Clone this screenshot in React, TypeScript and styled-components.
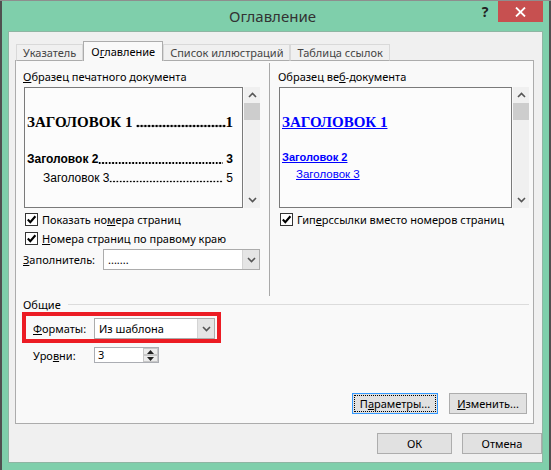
import React from "react";
import styled, { createGlobalStyle } from "styled-components";

const GlobalStyle = createGlobalStyle`
  * { box-sizing: border-box; }
  html, body { margin: 0; padding: 0; }
  body {
    width: 551px;
    height: 470px;
    overflow: hidden;
    background: #555;
    font-family: "Noto Sans", "Liberation Sans", sans-serif;
    font-size: 11px;
    color: #000;
  }
`;

const SERIF = `"Liberation Serif", "DejaVu Serif", serif`;
const SANS = `"Liberation Sans", Arial, sans-serif`;

const Page = styled.div`
  width: 551px;
  height: 470px;
  display: flex;
  flex-direction: column;
`;

const TopEdge = styled.div`
  height: 1px;
  flex: none;
  background: #8e8e8e;
`;

const Desk = styled.div`
  flex: 1;
  display: flex;
`;

const SideEdge = styled.div`
  width: 2px;
  flex: none;
  background: #505050;
`;

const Window = styled.div`
  width: 547px;
  flex: none;
  background: #7fcfab;
  display: flex;
  flex-direction: column;
  padding: 0 6px 7px;
`;

const TitleBar = styled.div`
  height: 30px;
  flex: none;
  margin: 0 -6px;
  padding-right: 6px;
  display: grid;
  grid-template-columns: 1fr auto 1fr;
`;

const Title = styled.div`
  grid-column: 2;
  align-self: center;
  font-size: 15px;
  color: #333;
  padding-bottom: 1px;
`;

const Controls = styled.div`
  grid-column: 3;
  justify-self: end;
  display: flex;
  align-items: flex-start;
`;

const HelpButton = styled.div`
  width: 26px;
  height: 21px;
  line-height: 22px;
  text-align: center;
  font-weight: bold;
  font-size: 14px;
  color: #222;
`;

const CloseButton = styled.div`
  width: 45px;
  height: 21px;
  background: #c75050;
  display: flex;
  align-items: center;
  justify-content: center;
`;

const Client = styled.div`
  flex: 1;
  background: #f0f0f0;
  border: 1px solid #8fb5a3;
  display: flex;
  flex-direction: column;
  padding: 9px 8px 8px 6px;
`;

const TabStrip = styled.div`
  height: 20px;
  flex: none;
  display: flex;
  align-items: flex-end;
  padding-left: 1px;
  margin-bottom: -1px;
  position: relative;
  z-index: 1;
`;

const Tab = styled.div<{ $active?: boolean }>`
  height: ${(p) => (p.$active ? 20 : 17)}px;
  padding: ${(p) => (p.$active ? "2px 7px 0" : "0 6px")};
  line-height: 16px;
  border: 1px solid ${(p) => (p.$active ? "#acacac" : "#d9d9d9")};
  border-bottom: ${(p) => (p.$active ? "none" : "1px solid #acacac")};
  background: ${(p) => (p.$active ? "#f9f9f9" : "#f0f0f0")};
  color: ${(p) => (p.$active ? "#000" : "#444")};
  white-space: nowrap;
`;

const Panel = styled.div`
  flex: 1;
  border: 1px solid #acacac;
  background: #f9f9f9;
  display: flex;
  flex-direction: column;
  padding: 0 4px 9px 0;
`;

const TopSection = styled.div`
  height: 235px;
  flex: none;
  display: flex;
  padding-left: 8px;
`;

const Column = styled.div<{ $w?: number }>`
  ${(p) => (p.$w ? `width: ${p.$w}px; flex: none;` : "flex: 1;")}
  padding-top: 8px;
  display: flex;
  flex-direction: column;
`;

const Divider = styled.div`
  width: 1px;
  flex: none;
  margin: 2px 9px 0;
  background: #a9a9a9;
`;

const GroupLabel = styled.div`
  line-height: 16px;
  margin: 0 0 2px -1px;
  white-space: nowrap;
`;

const Key = styled.span`
  text-decoration: underline;
`;

const PreviewFrame = styled.div`
  height: 121px;
  flex: none;
  display: flex;
`;

const PreviewBox = styled.div`
  flex: 1;
  min-width: 0;
  border: 1px solid #7a7a7a;
  background: #fcfcfc;
  padding: 25px 9px 0 2px;
  overflow: hidden;
`;

const ScrollBar = styled.div`
  width: 16px;
  flex: none;
  margin-left: 1px;
  background: #f0f0f0;
  display: flex;
  flex-direction: column;
`;

const ScrollArrow = styled.div`
  height: 16px;
  flex: none;
  display: flex;
  align-items: center;
  justify-content: center;
`;

const ScrollThumb = styled.div`
  height: 17px;
  flex: none;
  background: #cdcdcd;
`;

const ScrollTrack = styled.div`
  flex: 1;
`;

type LineProps = { $gap: number; $indent?: number; $serif?: boolean; $bold?: boolean; $size: number };

const TocLine = styled.div<LineProps>`
  display: flex;
  white-space: nowrap;
  margin-top: ${(p) => p.$gap}px;
  padding-left: ${(p) => p.$indent ?? 0}px;
  font-family: ${(p) => (p.$serif ? SERIF : SANS)};
  font-weight: ${(p) => (p.$bold ? "bold" : "normal")};
  font-size: ${(p) => p.$size}px;
  line-height: ${(p) => (p.$serif ? 18 : 16)}px;
`;

/* dot leader between a heading and its page number */
const Leader = styled.span<{ $step: number; $r: number; $y: number }>`
  flex: 1;
  min-width: 0;
  background-image: radial-gradient(circle, #000 ${(p) => p.$r}px, transparent ${(p) => p.$r + 0.6}px);
  background-size: ${(p) => p.$step}px ${(p) => p.$r * 2 + 2}px;
  background-repeat: repeat-x;
  background-position: 0 ${(p) => p.$y - p.$r - 1}px;
`;

const WebLink = styled.div<LineProps>`
  margin-top: ${(p) => p.$gap}px;
  padding-left: ${(p) => p.$indent ?? 0}px;
  font-family: ${(p) => (p.$serif ? SERIF : SANS)};
  font-weight: ${(p) => (p.$bold ? "bold" : "normal")};
  font-size: ${(p) => p.$size}px;
  line-height: ${(p) => (p.$serif ? 18 : 16)}px;
  color: #0000ff;
  text-decoration: underline;
  white-space: nowrap;
`;

const CheckRow = styled.div<{ $first?: boolean }>`
  height: 19px;
  flex: none;
  margin-top: ${(p) => (p.$first ? 2 : 0)}px;
  padding-left: 1px;
  display: flex;
  align-items: center;
  gap: 4px;
  white-space: nowrap;
`;

const CheckBox = styled.span`
  width: 13px;
  height: 13px;
  flex: none;
  border: 1px solid #333;
  background: #fff;
  display: inline-flex;
  align-items: center;
  justify-content: center;
`;

const FieldRow = styled.div<{ $gap: number; $indent: number }>`
  display: flex;
  align-items: center;
  margin-top: ${(p) => p.$gap}px;
  margin-left: ${(p) => p.$indent}px;
`;

const FieldLabel = styled.div<{ $w: number }>`
  width: ${(p) => p.$w}px;
  flex: none;
  white-space: nowrap;
`;

const Combo = styled.div<{ $w: number }>`
  width: ${(p) => p.$w}px;
  height: 21px;
  flex: none;
  border: 1px solid #acacac;
  background: #fff;
  display: flex;
`;

const ComboValue = styled.div`
  flex: 1;
  padding-left: 4px;
  line-height: 19px;
  white-space: nowrap;
`;

const ComboButton = styled.div`
  width: 17px;
  flex: none;
  background: #e5e5e5;
  border-left: 1px solid #d4d4d4;
  display: flex;
  align-items: center;
  justify-content: center;
`;

const GeneralHeader = styled.div`
  height: 15px;
  margin-top: 1px;
  padding-left: 7px;
  display: flex;
  align-items: center;
`;

const HeaderRule = styled.div`
  flex: 1;
  height: 1px;
  margin-left: 7px;
  background: #dcdcdc;
`;

const Highlight = styled.div`
  width: 199px;
  height: 31px;
  margin-left: 6px;
  border: 4px solid #ec1c24;
  padding: 2px 0 0 7px;
`;

const Spin = styled.div`
  width: 65px;
  height: 16px;
  border: 1px solid #abadb3;
  background: #fff;
  display: flex;
`;

const SpinValue = styled.div`
  flex: 1;
  padding-left: 3px;
  line-height: 14px;
`;

const SpinButtons = styled.div`
  width: 15px;
  flex: none;
  display: flex;
  flex-direction: column;
`;

const SpinHalf = styled.div`
  flex: 1;
  border: 1px solid #c8c8c8;
  background: #ececec;
  display: flex;
  align-items: center;
  justify-content: center;
`;

const Spacer = styled.div`
  flex: 1;
`;

const ButtonRow = styled.div`
  display: flex;
  justify-content: flex-end;
  gap: 11px;
  padding-right: 2px;
`;

const Button = styled.div<{ $w: number; $focused?: boolean }>`
  width: ${(p) => p.$w}px;
  height: 21px;
  border: 1px solid ${(p) => (p.$focused ? "#3399ff" : "#adadad")};
  background: #e1e1e1;
  padding: 1px;
  display: flex;
`;

const ButtonFace = styled.div<{ $focused?: boolean }>`
  flex: 1;
  border: 1px dotted ${(p) => (p.$focused ? "#000" : "transparent")};
  text-align: center;
  line-height: 15px;
  white-space: nowrap;
`;

const Footer = styled.div`
  height: 21px;
  flex: none;
  margin: 9px -8px 0 0;
  display: flex;
  justify-content: flex-end;
  gap: 10px;
`;

const Chevron = ({ up }: { up?: boolean }) => (
  <svg width="9" height="6" viewBox="0 0 9 6">
    <polyline
      points={up ? "1,5 4.5,1.5 8,5" : "1,1 4.5,4.5 8,1"}
      fill="none"
      stroke="#555"
      strokeWidth="1.6"
    />
  </svg>
);

const Triangle = ({ up }: { up?: boolean }) => (
  <svg width="7" height="4" viewBox="0 0 7 4">
    <polygon points={up ? "0,4 3.5,0 7,4" : "0,0 3.5,4 7,0"} fill="#222" />
  </svg>
);

const Check = () => (
  <svg width="11" height="11" viewBox="0 0 11 11">
    <polyline points="1.8,5.6 4.3,8.2 9.4,2.2" fill="none" stroke="#000" strokeWidth="2.1" />
  </svg>
);

const Scroll = () => (
  <ScrollBar>
    <ScrollArrow>
      <Chevron up />
    </ScrollArrow>
    <ScrollThumb />
    <ScrollTrack />
    <ScrollArrow>
      <Chevron />
    </ScrollArrow>
  </ScrollBar>
);

type BtnProps = { w: number; focused?: boolean; children: React.ReactNode };
const DialogButton = ({ w, focused, children }: BtnProps) => (
  <Button $w={w} $focused={focused}>
    <ButtonFace $focused={focused}>{children}</ButtonFace>
  </Button>
);

const CheckOption = ({ first, children }: { first?: boolean; children: React.ReactNode }) => (
  <CheckRow $first={first}>
    <CheckBox>
      <Check />
    </CheckBox>
    <span>{children}</span>
  </CheckRow>
);

export default function App() {
  return (
    <>
      <GlobalStyle />
      <Page>
        <TopEdge />
        <Desk>
          <SideEdge />
          <Window>
            <TitleBar>
              <Title>Оглавление</Title>
              <Controls>
                <HelpButton>?</HelpButton>
                <CloseButton>
                  <svg width="11" height="10" viewBox="0 0 11 10">
                    <path d="M1 0.5 L10 9.5 M10 0.5 L1 9.5" stroke="#fff" strokeWidth="1.8" />
                  </svg>
                </CloseButton>
              </Controls>
            </TitleBar>
            <Client>
              <TabStrip>
                <Tab>Указатель</Tab>
                <Tab $active>
                  О<Key>г</Key>лавление
                </Tab>
                <Tab>Список иллюстраций</Tab>
                <Tab>Таблица ссылок</Tab>
              </TabStrip>
              <Panel>
                <TopSection>
                  <Column $w={236}>
                    <GroupLabel>
                      <Key>О</Key>бразец печатного документа
                    </GroupLabel>
                    <PreviewFrame>
                      <PreviewBox>
                        <TocLine $gap={0} $serif $bold $size={15}>
                          <span>ЗАГОЛОВОК 1&nbsp;</span>
                          <Leader $step={3.75} $r={1.1} $y={13} />
                          <span>1</span>
                        </TocLine>
                        <TocLine $gap={20} $bold $size={12}>
                          <span>Заголовок 2</span>
                          <Leader $step={3.35} $r={0.8} $y={11.4} />
                          <span>&nbsp;3</span>
                        </TocLine>
                        <TocLine $gap={3} $indent={16} $size={12}>
                          <span>Заголовок 3</span>
                          <Leader $step={3.35} $r={0.7} $y={11.5} />
                          <span>&nbsp;5</span>
                        </TocLine>
                      </PreviewBox>
                      <Scroll />
                    </PreviewFrame>
                    <CheckOption first>
                      Показать но<Key>м</Key>ера страниц
                    </CheckOption>
                    <CheckOption>
                      <Key>Н</Key>омера страниц по правому краю
                    </CheckOption>
                    <FieldRow $gap={1} $indent={-1}>
                      <FieldLabel $w={80}>
                        <Key>З</Key>аполнитель:
                      </FieldLabel>
                      <Combo $w={157}>
                        <ComboValue>.......</ComboValue>
                        <ComboButton>
                          <Chevron />
                        </ComboButton>
                      </Combo>
                    </FieldRow>
                  </Column>
                  <Divider />
                  <Column>
                    <GroupLabel>
                      Образец ве<Key>б</Key>-документа
                    </GroupLabel>
                    <PreviewFrame>
                      <PreviewBox>
                        <WebLink $gap={0} $serif $bold $size={15}>
                          ЗАГОЛОВОК 1
                        </WebLink>
                        <WebLink $gap={18} $bold $size={11}>
                          Заголовок 2
                        </WebLink>
                        <WebLink $gap={1} $indent={14} $size={11.5}>
                          Заголовок 3
                        </WebLink>
                      </PreviewBox>
                      <Scroll />
                    </PreviewFrame>
                    <CheckOption first>
                      Гип<Key>е</Key>рссылки вместо номеров страниц
                    </CheckOption>
                  </Column>
                </TopSection>
                <GeneralHeader>
                  <span>Общие</span>
                  <HeaderRule />
                </GeneralHeader>
                <Highlight>
                  <FieldRow $gap={0} $indent={0}>
                    <FieldLabel $w={61}>
                      <Key>Ф</Key>орматы:
                    </FieldLabel>
                    <Combo $w={121}>
                      <ComboValue>Из шаблона</ComboValue>
                      <ComboButton>
                        <Chevron />
                      </ComboButton>
                    </Combo>
                  </FieldRow>
                </Highlight>
                <FieldRow $gap={4} $indent={17}>
                  <FieldLabel $w={61}>
                    Уро<Key>в</Key>ни:
                  </FieldLabel>
                  <Spin>
                    <SpinValue>3</SpinValue>
                    <SpinButtons>
                      <SpinHalf>
                        <Triangle up />
                      </SpinHalf>
                      <SpinHalf>
                        <Triangle />
                      </SpinHalf>
                    </SpinButtons>
                  </Spin>
                </FieldRow>
                <Spacer />
                <ButtonRow>
                  <DialogButton w={86} focused>
                    П<Key>а</Key>раметры...
                  </DialogButton>
                  <DialogButton w={78}>
                    <Key>И</Key>зменить...
                  </DialogButton>
                </ButtonRow>
              </Panel>
              <Footer>
                <DialogButton w={75}>ОК</DialogButton>
                <DialogButton w={80}>Отмена</DialogButton>
              </Footer>
            </Client>
          </Window>
          <SideEdge />
        </Desk>
      </Page>
    </>
  );
}
